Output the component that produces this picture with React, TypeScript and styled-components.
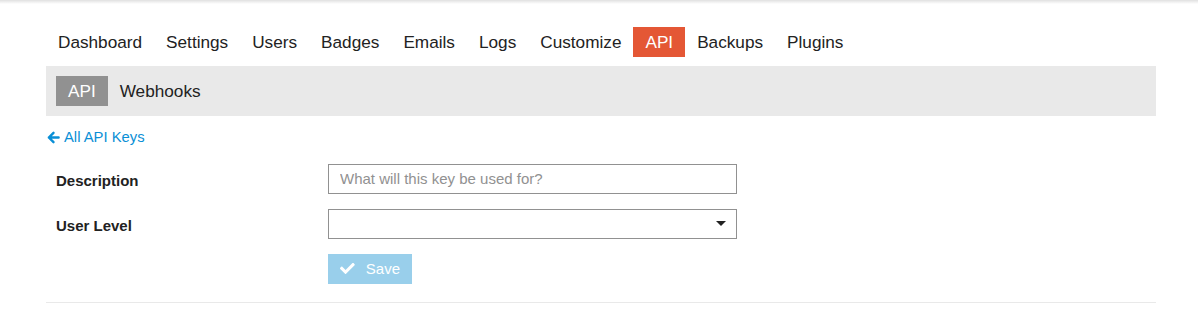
import styled, { createGlobalStyle } from "styled-components";

const GlobalStyle = createGlobalStyle`
  body {
    margin: 0;
    background: #fff;
    font-family: "Liberation Sans", Arial, Helvetica, sans-serif;
    color: #222;
  }
`;

const StyledHeaderShadow = styled.div`
  height: 4px;
  background: linear-gradient(to bottom, rgba(0, 0, 0, 0.12), rgba(0, 0, 0, 0));
`;
const StyledPage = styled.div`
  margin: 0 42px 0 46px;
  padding-top: 23px;
`;
const StyledNav = styled.ul`
  display: flex;
  list-style: none;
  margin: 0;
  padding: 0;
`;
const StyledNavItem = styled.li<{ $active?: boolean }>`
  height: 30px;
  line-height: 30px;
  padding: 0 12px;
  font-size: 17.2px;
  color: ${(p) => (p.$active ? "#fff" : "#222")};
  background: ${(p) => (p.$active ? "#e45735" : "transparent")};
  cursor: pointer;
`;
const StyledSubNav = styled.ul`
  display: flex;
  list-style: none;
  margin: 9px 0 0 0;
  padding: 10px;
  background: #e9e9e9;
`;
const StyledSubNavItem = styled.li<{ $active?: boolean }>`
  height: 30px;
  line-height: 30px;
  padding: 0 12px;
  font-size: 17.2px;
  color: ${(p) => (p.$active ? "#fff" : "#222")};
  background: ${(p) => (p.$active ? "#919191" : "transparent")};
`;
const StyledBackLink = styled.a`
  display: inline-flex;
  align-items: center;
  gap: 4px;
  margin: 12px 0 0 1px;
  height: 18px;
  font-size: 14.8px;
  color: #0a8fd6;
  text-decoration: none;
`;
const StyledForm = styled.form`
  display: flex;
  flex-direction: column;
  gap: 15px;
  padding: 0 10px;
  margin-top: 16px;
`;
const StyledRow = styled.div`
  display: flex;
  align-items: center;
`;
const StyledLabel = styled.label`
  width: 272px;
  padding-top: 3px;
  font-size: 15px;
  font-weight: bold;
  color: #222;
`;
const StyledInput = styled.input`
  box-sizing: border-box;
  width: 409px;
  height: 30px;
  padding: 0 11px;
  border: 1px solid #919191;
  font-family: inherit;
  font-size: 15px;
  color: #222;
  outline: none;
  &::placeholder {
    color: #919191;
  }
`;
const StyledSelect = styled.div`
  box-sizing: border-box;
  width: 409px;
  height: 30px;
  border: 1px solid #919191;
  display: flex;
  align-items: center;
  justify-content: flex-end;
  padding-right: 10px;
`;
const StyledCaret = styled.span`
  width: 0;
  height: 0;
  border-left: 5px solid transparent;
  border-right: 5px solid transparent;
  border-top: 5px solid #222;
`;
const StyledButton = styled.button`
  margin-left: 272px;
  width: 84px;
  height: 30px;
  display: flex;
  align-items: center;
  gap: 11px;
  padding: 0 12px;
  border: none;
  background: #99cfeb;
  color: #fff;
  font-family: inherit;
  font-size: 15px;
  cursor: not-allowed;
`;
const StyledDivider = styled.hr`
  margin: 18px 0 0 0;
  border: none;
  border-top: 1px solid #e9e9e9;
`;

const navItems = [
  "Dashboard",
  "Settings",
  "Users",
  "Badges",
  "Emails",
  "Logs",
  "Customize",
  "API",
  "Backups",
  "Plugins",
];

export default function App() {
  return (
    <>
      <GlobalStyle />
      <StyledHeaderShadow />
      <StyledPage>
        <StyledNav>
          {navItems.map((el) => (
            <StyledNavItem key={el} $active={el === "API"}>
              {el}
            </StyledNavItem>
          ))}
        </StyledNav>
        <StyledSubNav>
          <StyledSubNavItem $active>API</StyledSubNavItem>
          <StyledSubNavItem>Webhooks</StyledSubNavItem>
        </StyledSubNav>
        <StyledBackLink href="#">
          <svg width="13" height="13" viewBox="0 0 14 14" fill="none" stroke="currentColor" strokeWidth="2.6" strokeLinecap="round" strokeLinejoin="round">
            <path d="M12.5 7H2M7 2L2 7l5 5" />
          </svg>
          All API Keys
        </StyledBackLink>
        <StyledForm onSubmit={(e) => e.preventDefault()}>
          <StyledRow>
            <StyledLabel>Description</StyledLabel>
            <StyledInput type="text" placeholder="What will this key be used for?" />
          </StyledRow>
          <StyledRow>
            <StyledLabel>User Level</StyledLabel>
            <StyledSelect>
              <StyledCaret />
            </StyledSelect>
          </StyledRow>
          <StyledRow>
            <StyledButton disabled>
              <svg width="16" height="13" viewBox="0 0 512 400" fill="currentColor">
                <path d="M173.898 380.404l-166.4-166.4c-9.997-9.997-9.997-26.206 0-36.204l36.203-36.204c9.997-9.998 26.207-9.998 36.204 0L192 253.71 432.095 13.616c9.997-9.997 26.207-9.997 36.204 0l36.203 36.204c9.997 9.997 9.997 26.206 0 36.204l-294.4 294.401c-9.998 9.997-26.207 9.997-36.204-.001z" />
              </svg>
              Save
            </StyledButton>
          </StyledRow>
        </StyledForm>
        <StyledDivider />
      </StyledPage>
    </>
  );
}
